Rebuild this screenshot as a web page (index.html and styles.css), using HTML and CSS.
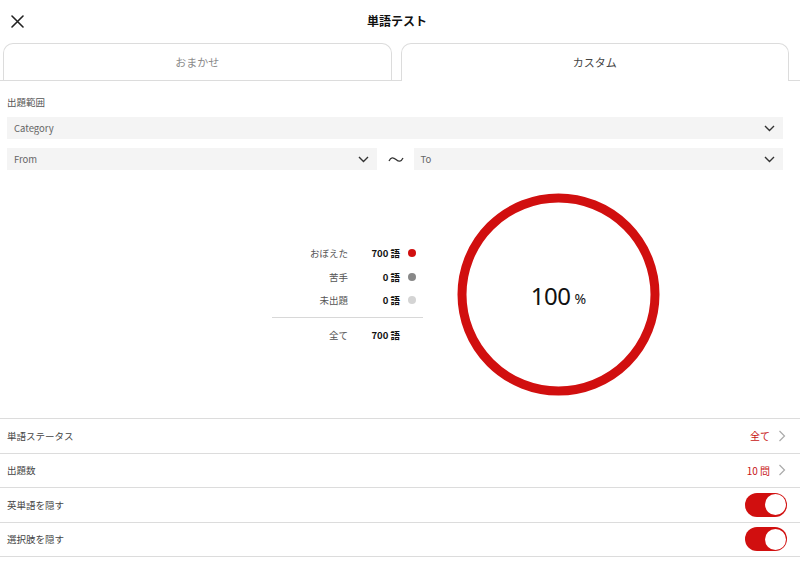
FILE: index.html
```html
<!DOCTYPE html>
<html lang="ja">
<head>
<meta charset="utf-8">
<title>単語テスト</title>
<link rel="stylesheet" href="styles.css">
</head>
<body>
<header class="topbar">
  <button class="close" aria-label="閉じる">
    <svg width="13" height="13" viewBox="0 0 13 13"><path d="M1 1 L12 12 M12 1 L1 12" stroke="#222" stroke-width="1.6" fill="none" stroke-linecap="round"/></svg>
  </button>
  <h1 class="title">単語テスト</h1>
  <span class="spacer"></span>
</header>

<nav class="tabs">
  <div class="tab">おまかせ</div>
  <div class="tab active">カスタム</div>
</nav>

<section class="range">
  <div class="range-label">出題範囲</div>
  <div class="select">
    <span>Category</span>
    <svg class="chev" width="11" height="7" viewBox="0 0 11 7"><path d="M1 1 L5.5 5.5 L10 1" stroke="#333" stroke-width="1.4" fill="none"/></svg>
  </div>
  <div class="range-row">
    <div class="select">
      <span>From</span>
      <svg class="chev" width="11" height="7" viewBox="0 0 11 7"><path d="M1 1 L5.5 5.5 L10 1" stroke="#333" stroke-width="1.4" fill="none"/></svg>
    </div>
    <div class="tilde">
      <svg width="16" height="7" viewBox="0 0 16 7"><path d="M1 5 C3 1 5 1 8 3.5 C11 6 13 6 15 2" stroke="#333" stroke-width="1.3" fill="none"/></svg>
    </div>
    <div class="select">
      <span>To</span>
      <svg class="chev" width="11" height="7" viewBox="0 0 11 7"><path d="M1 1 L5.5 5.5 L10 1" stroke="#333" stroke-width="1.4" fill="none"/></svg>
    </div>
  </div>
</section>

<section class="stats">
  <div class="legend">
    <span class="lg-label">おぼえた</span><span class="lg-value">700 語</span><span class="dot dot-red"></span>
    <span class="lg-label">苦手</span><span class="lg-value">0 語</span><span class="dot dot-gray"></span>
    <span class="lg-label">未出題</span><span class="lg-value">0 語</span><span class="dot dot-light"></span>
    <span class="lg-divider"></span>
    <span class="lg-label">全て</span><span class="lg-value">700 語</span><span></span>
  </div>
  <div class="ring">
    <svg width="203" height="203" viewBox="0 0 203 203"><circle cx="101.5" cy="101.5" r="96.5" stroke="#d10f0f" stroke-width="9" fill="none"/></svg>
    <div class="ring-text"><span class="pct">100</span><span class="pct-sign">%</span></div>
  </div>
</section>

<ul class="settings">
  <li class="row">
    <span class="row-label">単語ステータス</span>
    <span class="row-value">全て</span>
    <svg class="row-chev" width="9" height="12" viewBox="0 0 9 12"><path d="M1.5 1 L6.5 6 L1.5 11" stroke="#aaa" stroke-width="1.2" fill="none"/></svg>
  </li>
  <li class="row">
    <span class="row-label">出題数</span>
    <span class="row-value">10 問</span>
    <svg class="row-chev" width="9" height="12" viewBox="0 0 9 12"><path d="M1.5 1 L6.5 6 L1.5 11" stroke="#aaa" stroke-width="1.2" fill="none"/></svg>
  </li>
  <li class="row">
    <span class="row-label">英単語を隠す</span>
    <span class="toggle"><span class="knob"></span></span>
  </li>
  <li class="row">
    <span class="row-label">選択肢を隠す</span>
    <span class="toggle"><span class="knob"></span></span>
  </li>
</ul>
</body>
</html>
```

FILE: styles.css
```css
* { box-sizing: border-box; }

html, body {
  margin: 0;
  padding: 0;
  background: #fff;
}

body {
  width: 800px;
  height: 577px;
  overflow: hidden;
  font-family: "Noto Sans CJK JP", "Noto Sans", sans-serif;
  color: #333;
}

.topbar {
  height: 43px;
  display: grid;
  grid-template-columns: 60px 1fr 60px;
  align-items: center;
}

.close {
  border: 0;
  background: none;
  padding: 0 0 0 11px;
  height: 43px;
  display: flex;
  align-items: center;
  justify-content: flex-start;
  margin-top: -1px;
}

.title {
  margin: -2px 6px 0 0;
  text-align: center;
  font-size: 12px;
  font-weight: 700;
  color: #111;
  line-height: 1;
}

.tabs {
  display: flex;
  align-items: flex-start;
  gap: 9px;
  height: 38px;
  padding: 0 11px 0 3px;
  background: linear-gradient(#dcdcdc, #dcdcdc) left bottom / 100% 1px no-repeat;
}

.tab {
  flex: 1;
  height: 37px;
  border: 1px solid #dcdcdc;
  border-bottom: 0;
  border-radius: 10px 10px 0 0;
  display: flex;
  align-items: center;
  justify-content: center;
  font-size: 11px;
  color: #8a8a8a;
  background: #fff;
  padding-bottom: 1px;
}

.tab.active {
  color: #444;
  height: 38px;
}

.range {
  padding: 14px 17px 0 7px;
}

.range-label {
  font-size: 9.5px;
  line-height: 14px;
  color: #555;
  margin-bottom: 8px;
}

.select {
  height: 22px;
  background: #f4f4f4;
  display: flex;
  align-items: center;
  justify-content: space-between;
  padding: 0 7px;
  font-size: 9.5px;
  color: #666;
}

.chev { margin-right: 1px; }

.range-row {
  display: grid;
  grid-template-columns: 1fr 37px 1fr;
  margin-top: 9px;
}

.tilde {
  display: flex;
  align-items: center;
  justify-content: center;
  padding-left: 1px;
}

.stats {
  display: flex;
  align-items: center;
  padding: 23px 0 22px 272px;
  gap: 34px;
}

.legend {
  display: grid;
  grid-template-columns: 76px 52px 23px;
  grid-template-rows: 23.5px 23.5px 23.5px 6px 34px;
  align-items: center;
  font-size: 9.5px;
  width: 151px;
  padding-top: 4px;
}

.lg-label {
  text-align: right;
  color: #555;
}

.lg-value {
  text-align: right;
  font-weight: 700;
  color: #111;
}

.dot {
  width: 8px;
  height: 8px;
  border-radius: 50%;
  margin-left: 8px;
}

.dot-red { background: #d10f0f; }
.dot-gray { background: #888; }
.dot-light { background: #d4d4d4; }

.lg-divider {
  grid-column: 1 / -1;
  height: 1px;
  background: #d8d8d8;
  align-self: end;
}

.ring {
  position: relative;
  width: 203px;
  height: 203px;
}

.ring svg { display: block; }

.ring-text {
  position: absolute;
  inset: 0;
  display: flex;
  align-items: center;
  justify-content: center;
  color: #111;
  padding-top: 2px;
}

.pct {
  font-size: 24px;
  font-weight: 400;
  letter-spacing: -0.5px;
  font-family: "Noto Sans", sans-serif;
}

.pct-sign {
  font-size: 14px;
  margin-left: 4px;
  margin-top: 5px;
  font-family: "Noto Sans", sans-serif;
}

.settings {
  list-style: none;
  margin: 0;
  padding: 0;
  border-bottom: 1px solid #dcdcdc;
}

.row {
  height: 34.5px;
  border-top: 1px solid #dcdcdc;
  display: flex;
  align-items: center;
  padding: 0 13px 0 7px;
  font-size: 9.5px;
}

.row-label {
  flex: 1;
  color: #444;
}

.row-value {
  color: #c81414;
  font-size: 10px;
  margin-right: 8px;
}

.toggle {
  width: 42px;
  height: 24px;
  border-radius: 12px;
  background: #d10f0f;
  padding: 1.5px;
  display: flex;
  justify-content: flex-end;
}

.knob {
  width: 21px;
  height: 21px;
  border-radius: 50%;
  background: #fff;
}
```
